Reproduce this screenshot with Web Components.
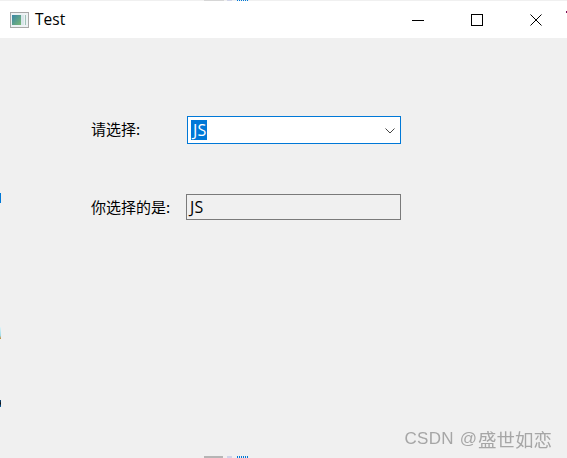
<!DOCTYPE html>
<html><head><meta charset="utf-8">
<style>html,body{margin:0;padding:0;background:#f0f0f0}</style>
</head><body>
<qt-window title="Test">
  <form-row class="first" label="请选择:" width="96" shift="-2"><qt-combo value="JS"></qt-combo></form-row>
  <form-row label="你选择的是:" width="95" shift="-1"><qt-output value="JS"></qt-output></form-row>
</qt-window>
<script>
const UI='"Noto Sans CJK SC","Noto Sans",sans-serif';
class QtWindow extends HTMLElement{constructor(){super();const s=this.attachShadow({mode:'open'});
s.innerHTML=`<style>
:host{display:flex;flex-direction:column;position:relative;width:567px;height:458px;overflow:hidden;background:#f0f0f0;color:#000}
.bar{display:flex;align-items:center;height:37px;margin-top:1px;background:#fff;padding-left:10px}
.ico{display:block;margin-right:6px}
.t{font:15.5px/20px "Open Sans","Noto Sans",sans-serif;flex:1;margin-top:-1px}
.btn{display:flex;align-items:center;justify-content:center;width:59px;height:37px}
.btn.last{margin-right:2px}
.body{display:flex;flex-direction:column;gap:50px;padding:78px 0 0 91px}
.wm{position:absolute;right:15px;top:428px;font:18.5px/22px "Noto Sans CJK SC",sans-serif;color:#a6a6a6;filter:blur(.3px);white-space:nowrap;display:flex;align-items:center}
.wm b{font:400 17px/22px "Liberation Sans",sans-serif}
.wm b.c{letter-spacing:.25px;margin-right:6px}
.wm b.a{margin-right:1px}
i{position:absolute;display:block}
</style>
<div class="bar">
<svg class="ico" width="19" height="16" viewBox="0 0 19 16"><defs><linearGradient id="g" x1="0" y1="0" x2="1" y2="1"><stop offset="0" stop-color="#3a86a8"/><stop offset="1" stop-color="#7ab874"/></linearGradient></defs><rect x=".5" y=".5" width="18" height="15" fill="#eef2f4" stroke="#a8a8a8"/><rect x="2" y="3" width="9" height="10" fill="url(#g)"/><rect x="11" y="3" width="3" height="10" fill="#d9e6ea"/><rect x="15" y="3" width="1" height="10" fill="#9fc4b8"/></svg>
<span class="t">${this.getAttribute('title')}</span>
<span class="btn"><svg width="12" height="12" viewBox="0 0 12 12"><path d="M0 6.5H12" stroke="#000" fill="none"/></svg></span>
<span class="btn"><svg width="12" height="12" viewBox="0 0 12 12"><rect x=".5" y=".5" width="11" height="11" stroke="#000" fill="none"/></svg></span>
<span class="btn last"><svg width="12" height="12" viewBox="0 0 12 12"><path d="M.5 .5L11.5 11.5M11.5 .5L.5 11.5" stroke="#000" stroke-width="1" fill="none"/></svg></span>
</div>
<div class="body"><slot></slot></div>
<div class="wm"><b class="c">CSDN</b><b class="a">@</b>盛世如恋</div>
<i style="left:0;top:193px;width:1px;height:10px;background:#0078d7"></i>
<i style="left:0;top:327px;width:1px;height:12px;background:linear-gradient(#e0f4f8,#a0dcea 70%,#c88a30)"></i>
<i style="left:0;top:400px;width:1px;height:7px;background:linear-gradient(#0b4f8a,#111 50%,#0b6fc0)"></i>
<i style="left:566px;top:11px;width:1px;height:2px;background:#7a0f5a"></i>
<i style="left:204px;top:456px;width:19px;height:2px;background:#b5b5b5"></i>
<i style="left:227px;top:456px;width:5px;height:2px;background:#d0d4e8"></i>
<i style="left:237px;top:456px;width:11px;height:2px;background:repeating-linear-gradient(90deg,#0078d7 0 1px,transparent 1px 2px)"></i>
<i style="left:204px;top:0;width:20px;height:1px;background:#d6d6d6"></i>
<i style="left:227px;top:0;width:5px;height:1px;background:#d0d4e8"></i>
<i style="left:237px;top:0;width:11px;height:1px;background:repeating-linear-gradient(90deg,#0078d7 0 1px,transparent 1px 2px)"></i>`;
}}
class FormRow extends HTMLElement{constructor(){super();const s=this.attachShadow({mode:'open'});
s.innerHTML=`<style>:host{display:flex;align-items:center;font:15px/20px ${UI};color:#000}
.l{white-space:nowrap;width:${this.getAttribute('width')}px;flex:none;margin-top:${this.getAttribute('shift')}px}</style><span class="l">${this.getAttribute('label')}</span><slot></slot>`;
}}
class QtCombo extends HTMLElement{constructor(){super();const s=this.attachShadow({mode:'open'});
s.innerHTML=`<style>:host{display:flex;align-items:center;box-sizing:border-box;width:214px;height:28px;border:1px solid #0078d7;background:#fff;padding:0 5px 0 3px}
.v{flex:1;display:flex}
.v span{background:#0078d7;color:#fff;font:16px/20px "Open Sans","Noto Sans",sans-serif;padding:0 1px 0 2px;letter-spacing:.2px;margin-top:-1px}
svg{display:block;margin-top:1px}</style><span class="v"><span>${this.getAttribute('value')}</span></span>
<svg width="10" height="6" viewBox="0 0 10 6"><path d="M.5 .5L5 5L9.5 .5" fill="none" stroke="#444" stroke-width="1"/></svg>`;
}}
class QtOutput extends HTMLElement{constructor(){super();const s=this.attachShadow({mode:'open'});
s.innerHTML=`<style>:host{display:flex;align-items:center;box-sizing:border-box;width:215px;height:26px;border:1px solid #7a7a7a;background:#f0f0f0;padding-left:3px;font:16px/20px "Open Sans","Noto Sans",sans-serif;letter-spacing:.2px;color:#000}</style>${this.getAttribute('value')}`;
}}
customElements.define('qt-window',QtWindow);
customElements.define('form-row',FormRow);
customElements.define('qt-combo',QtCombo);
customElements.define('qt-output',QtOutput);
</script>
</body></html>
